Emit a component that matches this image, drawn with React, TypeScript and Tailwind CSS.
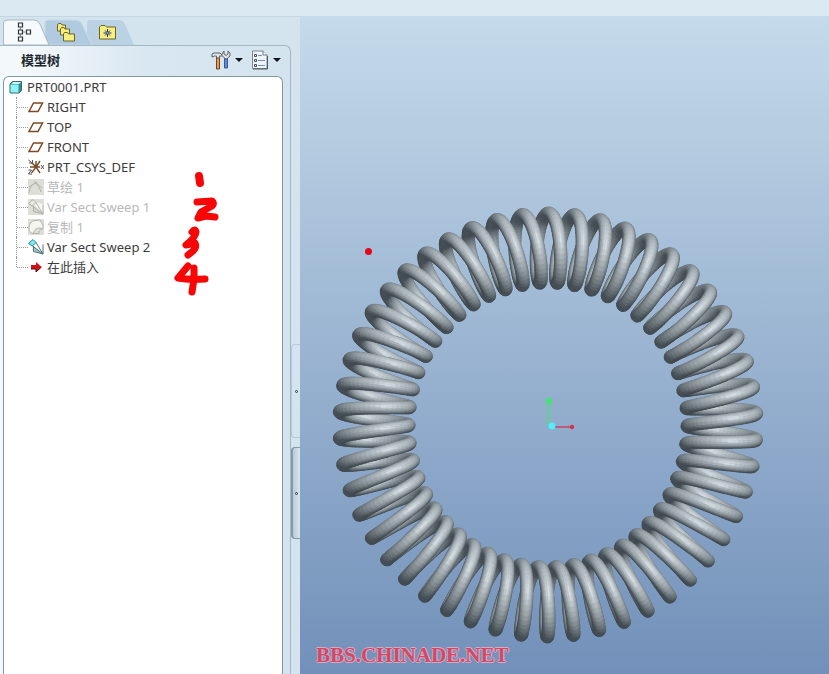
import React, { useMemo } from 'react';

type Vec = [number, number, number];

// Toroidal spring seen almost along its axis
const COILS = 50;
const STEPS = 48;
const SIDES = 22;
const RING_RADIUS = 177;
const COIL_RADIUS = 34.9;
const WIRE_RADIUS = 6.2;
const PHASE = (0.2 * Math.PI) / 180;
const SQUASH = 0.983;
const SHEAR = 0.18;
const LIGHT: Vec = [0.18, 0.4, 0.9];

const normalize = (v: Vec): Vec => {
  const l = Math.hypot(v[0], v[1], v[2]) || 1;
  return [v[0] / l, v[1] / l, v[2] / l];
};

const cross = (a: Vec, b: Vec): Vec => [
  a[1] * b[2] - a[2] * b[1],
  a[2] * b[0] - a[0] * b[2],
  a[0] * b[1] - a[1] * b[0]
];

const helix = (t: number): Vec => {
  const angle = PHASE + t / COILS;
  const r = RING_RADIUS + COIL_RADIUS * Math.cos(t);
  const z = COIL_RADIUS * Math.sin(t);
  return [r * Math.sin(angle) * SQUASH + z * SHEAR, r * Math.cos(angle), z];
};

const HALF = normalize([LIGHT[0], LIGHT[1], LIGHT[2] + 1]);

const shade = (n: Vec) => {
  const diffuse = Math.max(0, n[0] * LIGHT[0] + n[1] * LIGHT[1] + n[2] * LIGHT[2]);
  const spec = Math.pow(Math.max(0, n[0] * HALF[0] + n[1] * HALF[1] + n[2] * HALF[2]), 30);
  const v = 66 + 128 * Math.pow(diffuse, 1.1) + 26 * spec;
  return `rgb(${Math.round(v)},${Math.round(v + 9)},${Math.round(v + 14)})`;
};

const buildSpring = () => {
  const faces: { z: number; points: string; fill: string }[] = [];
  const total = COILS * STEPS;
  const rings: { p: Vec; n: Vec }[][] = [];
  for (let i = 0; i <= total; i++) {
    const t = (i / STEPS) * Math.PI * 2;
    const c = helix(t);
    const a = helix(t - 0.01);
    const b = helix(t + 0.01);
    const tangent = normalize([b[0] - a[0], b[1] - a[1], b[2] - a[2]]);
    const angle = PHASE + t / COILS;
    const along: Vec = [Math.cos(angle), -Math.sin(angle), 0];
    const u = normalize(cross(tangent, along));
    const v = cross(tangent, u);
    const ring: { p: Vec; n: Vec }[] = [];
    for (let j = 0; j <= SIDES; j++) {
      const w = (j / SIDES) * Math.PI * 2;
      const n = [0, 1, 2].map((k) => u[k] * Math.cos(w) + v[k] * Math.sin(w)) as Vec;
      ring.push({ n, p: [0, 1, 2].map((k) => c[k] + n[k] * WIRE_RADIUS) as Vec });
    }
    rings.push(ring);
  }
  for (let i = 0; i < total; i++) {
    for (let j = 0; j < SIDES; j++) {
      const q = [rings[i][j], rings[i][j + 1], rings[i + 1][j + 1], rings[i + 1][j]];
      const n = normalize([0, 1, 2].map((k) => q.reduce((s, c) => s + c.n[k], 0)) as Vec);
      if (n[2] < -0.02) continue;
      faces.push({
        z: q.reduce((s, c) => s + c.p[2], 0),
        points: q.map((c) => `${c.p[0].toFixed(2)},${(-c.p[1]).toFixed(2)}`).join(' '),
        fill: shade(n)
      });
    }
  }
  return faces.sort((a, b) => a.z - b.z);
};

function Spring() {
  const faces = useMemo(buildSpring, []);
  return (
    <svg viewBox="-220 -222 440 444" className="absolute left-[28px] top-[187px] h-[444px] w-[440px]">
      {faces.map((f, i) => (
        <polygon key={i} points={f.points} fill={f.fill} stroke={f.fill} strokeWidth="0.5" strokeLinejoin="round" />
      ))}
      {/* Coordinate system marker */}
      <path d="M0 0 L1 -24" stroke="#4fdc7c" strokeWidth="1.6" />
      <circle cx="1" cy="-24" r="3.5" fill="#4fdc7c" />
      <path d="M4 2 H23" stroke="#cc3a58" strokeWidth="1.4" />
      <circle cx="24" cy="2" r="2.2" fill="#d8304e" />
      <circle cx="4" cy="1" r="3.4" fill="#4ff0fb" />
    </svg>
  );
}

const PartIcon = () => (
  <svg viewBox="0 0 14 14" className="h-3.5 w-3.5 shrink-0">
    <path d="M1 4 L3.5 1.5 H12.5 V10.5 L10 13 H1Z" fill="#2f8d95" stroke="#3f666c" />
    <path d="M1.5 4.5 H9.5 V12.5 H1.5Z" fill="#8ff4f5" />
    <path d="M2.5 4 L4 2 H12 L10 4Z" fill="#c4fbfb" />
  </svg>
);

const PlaneIcon = () => (
  <svg viewBox="0 0 16 16" className="h-4 w-4 shrink-0">
    <path d="M5.5 4 H14.5 L10 12.5 H1Z" fill="none" stroke="#7a4a26" strokeWidth="1.5" />
  </svg>
);

const CsysIcon = () => (
  <svg viewBox="0 0 16 16" className="h-4 w-4 shrink-0" fill="none">
    <path d="M2 8 H12 M8 2 V9 M3.5 3.5 L8 8 L12 14 M12 2 L8 8 L3.5 14" stroke="#7a4a26" strokeWidth="1.4" />
    <path d="M0.5 1 L4 4 M4.5 1 V4 H1 M13 6 L16 10 M16 6 L13 10 M0.5 11 H3.5 L0.5 15 H4" stroke="#555" />
  </svg>
);

const SketchIcon = () => (
  <svg viewBox="0 0 16 16" className="h-4 w-4 shrink-0">
    <rect width="16" height="16" fill="#deded9" />
    <path d="M1 14 C3 3 9 0 13 13 M1 8 L9 3 M6 2 L14 9" fill="none" stroke="#b3b3ac" />
  </svg>
);

const SweepIcon = ({ muted = false }: { muted?: boolean }) => (
  <svg viewBox="0 0 16 16" className="h-4 w-4 shrink-0">
    {muted && <rect width="16" height="16" fill="#deded9" />}
    <path d="M5 5 L8.5 3.5 L15.5 5 V15Z" fill={muted ? '#f6f6f3' : '#ffffff'} />
    <path d="M4.5 6.5 L15 15 L5.5 12.5Z" fill={muted ? '#d3d3cd' : '#9fc9cb'} />
    <path d="M0.5 4.5 L5 0.5 L8 3.5 L4.5 7Z" fill={muted ? '#e8e8e3' : '#7eeaf2'} stroke={muted ? '#b3b3ac' : '#218ea0'} />
    <path d="M8 3.5 L15 15 V5.5 M4.5 7 L15 15 L5.5 12.5 V7" fill="none" stroke={muted ? '#b3b3ac' : '#4c7076'} />
  </svg>
);

const CopyIcon = () => (
  <svg viewBox="0 0 16 16" className="h-4 w-4 shrink-0">
    <rect width="16" height="16" fill="#deded9" />
    <path d="M1 10 C1 5 3 2 7 1.5 L12 1 L15 6 V10 C11 8 7 9 5 14.5 C2 14 1 12 1 10Z" fill="#f4f4f1" stroke="#b3b3ac" />
    <path d="M5 14.5 H11 C11 12 12 11 14 10" fill="none" stroke="#b3b3ac" />
  </svg>
);

const InsertIcon = () => (
  <svg viewBox="0 0 16 16" className="h-4 w-4 shrink-0">
    <path d="M3 6 H8 V3 L13.5 8 L8 13 V10 H3Z" fill="#d40f16" />
    <path d="M3 10 H8 V13 L13.5 8" fill="none" stroke="#4a1010" />
  </svg>
);

const items = [
  { label: 'RIGHT', icon: <PlaneIcon /> },
  { label: 'TOP', icon: <PlaneIcon /> },
  { label: 'FRONT', icon: <PlaneIcon /> },
  { label: 'PRT_CSYS_DEF', icon: <CsysIcon /> },
  { label: '草绘 1', icon: <SketchIcon />, muted: true },
  { label: 'Var Sect Sweep 1', icon: <SweepIcon muted />, muted: true },
  { label: '复制 1', icon: <CopyIcon />, muted: true },
  { label: 'Var Sect Sweep 2', icon: <SweepIcon /> },
  { label: '在此插入', icon: <InsertIcon /> }
];

function Tabs() {
  return (
    <div className="relative flex h-7 items-end" role="tablist">
      <svg viewBox="0 0 135 26" className="absolute bottom-0 left-0 h-[26px] w-[135px]">
        <path d="M87 26 V4 Q87 1 90 1 H118 Q123 1 125 5 L134 26Z" fill="#bad2e4" />
        <path d="M45 26 V4 Q45 1 48 1 H76 Q80 1 82 5 L92 26Z" fill="#b0cbdf" stroke="#c9dbe8" />
        <path d="M3.5 26 V4 Q3.5 1 7 1 H34 Q38 1 40 5 L49 26Z" fill="#f6fafc" stroke="#a9b8c3" />
      </svg>
      <button role="tab" aria-selected="true" aria-label="Model tree" className="relative ml-4 flex h-[26px] w-4 items-center">
        <svg viewBox="0 0 16 20" className="h-5 w-4" fill="none" stroke="#2b3036" strokeWidth="1.2">
          <path d="M2.5 1 H6.5 V5 H2.5Z M2.5 8 H6.5 V12 H2.5Z M2.5 15 H6.5 V19 H2.5Z M10.5 8 H14.5 V12 H10.5Z" />
          <path d="M4.5 5 V8 M4.5 12 V15 M6.5 10 H10.5" stroke="#7a8188" />
        </svg>
      </button>
      <button role="tab" aria-selected="false" aria-label="Folders" className="relative ml-6 flex h-[26px] w-5 items-center">
        <svg viewBox="0 0 20 20" className="h-5 w-5" fill="#f7ee7c" stroke="#6b6430">
          <path d="M1.5 3 L2.5 1.5 H5 L6 3 H9.5 V9 H1.5Z" />
          <path d="M4.5 7 L5.5 5.5 H8 L9 7 H13.5 V13 H4.5Z" />
          <path d="M7.5 12 L8.5 10.5 H11.5 L12.5 12 H18.5 V19 H7.5Z" />
        </svg>
      </button>
      <button role="tab" aria-selected="false" aria-label="Favorites" className="relative ml-[22px] flex h-[26px] w-5 items-center">
        <svg viewBox="0 0 20 16" className="h-4 w-5">
          <path d="M1.5 15 V3 L3 1.5 H7 L8.5 3 H17.5 V15Z" fill="#f9f07c" stroke="#6b632c" />
          <path d="M9.5 5 V13 M5.5 9 H13.5 M7 6.5 L12 11.5 M12 6.5 L7 11.5" stroke="#14307f" />
          <circle cx="9.5" cy="9" r="0.7" fill="#f9f07c" />
        </svg>
      </button>
    </div>
  );
}

const Caret = () => (
  <svg viewBox="0 0 8 4" className="h-1 w-2">
    <path d="M0 0 H8 L4 4Z" fill="#10141c" />
  </svg>
);

function PanelHeader() {
  return (
    <div className="flex h-[30px] items-center pb-0.5 pl-[21px]">
      <h1 className="flex-1 text-[13px] leading-5 font-bold text-[#20272e]">模型树</h1>
      <button aria-label="Settings" className="flex items-center gap-1">
        <svg viewBox="0 0 20 20" className="h-5 w-5">
          <path d="M1 7 V4 L3 3 H9 L12 6 L10 6 H8.5 V9 H5.5 V6 H3.5Z" fill="#dfe5e8" stroke="#5b6468" />
          <path d="M5.5 8 H8.5 V19 H5.5Z" fill="#e89a50" stroke="#70451f" />
          <path d="M13 1 V4 L15 5.5 L17 4 V1 L19 3 V6 L16.5 8 V9 H13.5 V8 L11 5.5 V4Z" fill="#dfe5e8" stroke="#5b6468" />
          <path d="M13.5 9 H16.5 V18 H13.5Z" fill="#5f8adb" stroke="#3a5896" />
        </svg>
        <Caret />
      </button>
      <button aria-label="Show" className="mr-[9px] ml-2 flex items-center gap-1">
        <svg viewBox="0 0 18 20" className="h-5 w-[18px]">
          <path d="M1.5 1 H12 L16 5 V18.5 H1.5Z" fill="#eef4fa" stroke="#7c8791" />
          <path d="M2 19 H16.5 V6" fill="none" stroke="#4f5961" />
          <path d="M12 1 V5 H16" fill="#fff" stroke="#6c7780" />
          <path d="M7 5.5 H11 M7 10.5 H14 M7 15.5 H14" stroke="#6d93c0" />
          <path d="M3.5 4.5 H5.5 V6.5 H3.5Z M3.5 9.5 H5.5 V11.5 H3.5Z M3.5 14.5 H5.5 V16.5 H3.5Z" fill="#fff" stroke="#444b52" />
        </svg>
        <Caret />
      </button>
    </div>
  );
}

function ModelTree() {
  return (
    <div className="relative mr-[7px] ml-[3px] flex-1 rounded-t-md border border-b-0 border-[#7d9aa3] bg-white text-[13px] leading-5 text-[#3c3c3c]">
      <div className="flex h-5 items-center gap-1 pl-[5px]">
        <PartIcon />
        <span>PRT0001.PRT</span>
      </div>
      <ul className="pl-3">
        {items.map((item, i) => (
          <li key={item.label} className="flex h-5 items-center">
            <span className={`w-0 self-start border-l border-dotted border-[#9a9a9a] ${i === items.length - 1 ? 'h-2.5' : 'h-5'}`} />
            <span className="w-[11px] border-t border-dotted border-[#9a9a9a]" />
            {item.icon}
            <span className={item.muted ? 'ml-[3px] text-[#b9b9b9]' : 'ml-[3px]'}>{item.label}</span>
          </li>
        ))}
      </ul>
      {/* Handwritten step marks */}
      <svg viewBox="0 0 50 130" className="absolute left-[168px] top-[90px] h-[130px] w-[50px]" fill="none" stroke="#f80606" strokeLinecap="round" strokeLinejoin="round">
        <path d="M27 9 L28 16" strokeWidth="8" />
        <path d="M25 35 L40 34 Q43 36 40 39 L29 45 L26 51 L34 49 L43 50" strokeWidth="7" />
        <path d="M20 65 Q23 61 24 65 Q24 70 14 78 L23 76 Q25 80 21 84 L16 88" strokeWidth="7" />
        <path d="M16 99 L6 111 Q16 113 33 112 M22 101 L22 112 L20 125" strokeWidth="7" />
      </svg>
    </div>
  );
}

function Sash() {
  return (
    <div className="flex w-[9px] flex-col gap-[9px] pt-[327px]">
      <button aria-label="Resize panel" className="flex h-[94px] items-center justify-center rounded-l border border-r-0 border-[#b5c8d4]">
        <span className="h-[3px] w-[3px] rounded-full border border-[#2a3b47]" />
      </button>
      <button aria-label="Collapse panel" className="flex h-[92px] items-center justify-center rounded-l border border-r-0 border-l-2 border-[#8899a5] bg-linear-to-r from-[#b9cbd8] to-[#d8e6f0]">
        <span className="h-[3px] w-[3px] rounded-full border border-[#2a3b47]" />
      </button>
    </div>
  );
}

const App = () => {
  return (
    <div className="flex min-h-screen flex-col bg-[#d6e5f0] font-['Noto_Sans','Noto_Sans_CJK_SC',sans-serif]">
      <div className="h-4 bg-[#dbe9f2]" />
      <div className="flex flex-1">
        <aside className="flex w-[300px] shrink-0 border-t border-[#c6d6e0] bg-[#d4e4ef]">
          <div className="flex flex-1 flex-col">
            <Tabs />
            <div className="flex flex-1 flex-col rounded-tr-md border-t border-r border-[#a3b6c3] bg-linear-to-r from-[#f3f8fb] from-10% via-[#d9e7f1] via-50% to-[#d4e4ef]">
              <PanelHeader />
              <ModelTree />
            </div>
          </div>
          <Sash />
        </aside>
        <main className="relative flex-1 overflow-hidden bg-linear-to-b from-[#c5daea] to-[#7290b9]">
          <Spring />
          <span className="absolute left-[65px] top-[232px] h-[7px] w-[7px] rounded-full bg-[#e8041c]" />
          <p className="absolute bottom-1.5 left-4 font-['Liberation_Serif',serif] text-[21px] leading-[26px] font-bold text-[#cf4a63] [text-shadow:1px_0_#dba9c8,-1px_0_#dba9c8,0_1px_#dba9c8,0_-1px_#dba9c8]">
            BBS.CHINADE.NET
          </p>
        </main>
      </div>
    </div>
  );
};

export default App;
